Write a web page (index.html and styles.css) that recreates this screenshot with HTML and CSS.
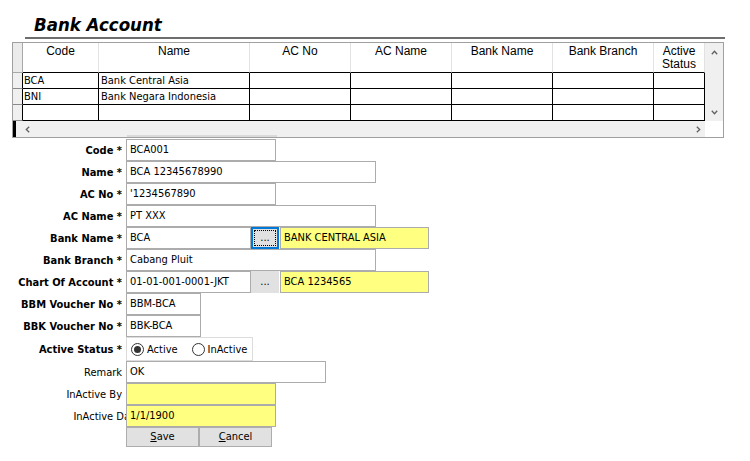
FILE: index.html
```html
<!DOCTYPE html>
<html>
<head>
<meta charset="utf-8">
<link rel="stylesheet" href="styles.css">
</head>
<body>
<div class="page">
  <div class="title">Bank Account</div>
  <div class="rule"></div>

  <div class="grid">
    <div class="tbl">
      <div class="hc rh"></div>
      <div class="hc">Code</div>
      <div class="hc">Name</div>
      <div class="hc">AC No</div>
      <div class="hc">AC Name</div>
      <div class="hc">Bank Name</div>
      <div class="hc">Bank Branch</div>
      <div class="hc">Active<br>Status</div>

      <div class="dc rh"></div>
      <div class="dc">BCA</div>
      <div class="dc pad2">Bank Central Asia</div>
      <div class="dc"></div><div class="dc"></div><div class="dc"></div><div class="dc"></div><div class="dc"></div>

      <div class="dc rh"></div>
      <div class="dc">BNI</div>
      <div class="dc pad2">Bank Negara Indonesia</div>
      <div class="dc"></div><div class="dc"></div><div class="dc"></div><div class="dc"></div><div class="dc"></div>

      <div class="dc rh"></div>
      <div class="dc"></div><div class="dc"></div><div class="dc"></div><div class="dc"></div><div class="dc"></div><div class="dc"></div><div class="dc"></div>
    </div>
    <div class="vscroll">
      <svg class="arrow" width="7" height="5" viewBox="0 0 7 5"><path d="M0.8 4.2 L3.5 1.3 L6.2 4.2" fill="none" stroke="#606060" stroke-width="1.3"/></svg>
      <svg class="arrow" width="7" height="5" viewBox="0 0 7 5"><path d="M0.8 0.8 L3.5 3.7 L6.2 0.8" fill="none" stroke="#606060" stroke-width="1.3"/></svg>
    </div>
    <div class="hscroll">
      <span class="mark"></span>
      <svg class="arrow larr" width="5" height="7" viewBox="0 0 5 7"><path d="M4.2 0.8 L1.3 3.5 L4.2 6.2" fill="none" stroke="#606060" stroke-width="1.3"/></svg>
      <span class="thumb"></span>
      <svg class="arrow rarr" width="5" height="7" viewBox="0 0 5 7"><path d="M0.8 0.8 L3.7 3.5 L0.8 6.2" fill="none" stroke="#606060" stroke-width="1.3"/></svg>
    </div>
    <div class="corner"></div>
  </div>

  <div class="form">
    <div class="row"><div class="lbl">Code *</div><div class="field w150">BCA001</div></div>
    <div class="row"><div class="lbl">Name *</div><div class="field w250">BCA 12345678990</div></div>
    <div class="row"><div class="lbl">AC No *</div><div class="field w150">'1234567890</div></div>
    <div class="row"><div class="lbl">AC Name *</div><div class="field w250">PT XXX</div></div>
    <div class="row">
      <div class="lbl">Bank Name *</div>
      <div class="field w125">BCA</div>
      <div class="dots focus"><span class="focusrect">...</span></div>
      <div class="field yellow w149">BANK CENTRAL ASIA</div>
    </div>
    <div class="row"><div class="lbl">Bank Branch *</div><div class="field w250">Cabang Pluit</div></div>
    <div class="row">
      <div class="lbl">Chart Of Account *</div>
      <div class="field w125">01-01-001-0001-JKT</div>
      <div class="dots"><span class="focusrect plain">...</span></div>
      <div class="field yellow w149">BCA 1234565</div>
    </div>
    <div class="row"><div class="lbl">BBM Voucher No *</div><div class="field w75">BBM-BCA</div></div>
    <div class="row"><div class="lbl">BBK Voucher No *</div><div class="field w75">BBK-BCA</div></div>
    <div class="row tall">
      <div class="lbl">Active Status *</div>
      <div class="radios">
        <span class="opt"><span class="radio on"></span>Active</span>
        <span class="opt second"><span class="radio"></span>InActive</span>
      </div>
    </div>
    <div class="row"><div class="lbl normal">Remark</div><div class="field w200">OK</div></div>
    <div class="row"><div class="lbl normal">InActive By</div><div class="field yellow w150"></div></div>
    <div class="row"><div class="lbl normal clipbox"><span class="clip">InActive Date</span></div><div class="field yellow w150">1/1/1900</div></div>
    <div class="row btnrow">
      <div class="lbl"></div>
      <div class="btn"><u>S</u>ave</div>
      <div class="btn second"><u>C</u>ancel</div>
    </div>
  </div>
</div>
</body>
</html>
```

FILE: styles.css
```css
html, body {
  margin: 0;
  padding: 0;
  background: #ffffff;
}

body {
  font-family: "DejaVu Sans Condensed", "DejaVu Sans", sans-serif;
  font-stretch: condensed;
  font-size: 11px;
  color: #000;
}

.page {
  width: 750px;
}

.title {
  height: 37px;
  box-sizing: border-box;
  padding-top: 14px;
  padding-left: 34px;
  line-height: 21px;
  font-size: 18.5px;
  font-weight: bold;
  font-style: italic;
  color: #000;
}

.rule {
  margin-left: 25px;
  width: 700px;
  height: 2px;
  background: #6e6e6e;
  margin-bottom: 3px;
}

/* ---------- data grid ---------- */
.grid {
  margin-left: 12px;
  width: 710px;
  border: 1px solid #a0a0a0;
  display: grid;
  grid-template-columns: 692px 18px;
  grid-template-rows: 78px 16px;
}

.tbl {
  display: grid;
  grid-template-columns: 10px 76px 151px 101px 101px 101px 101px 51px;
  grid-template-rows: 30px 16px 16px 16px;
}

.hc {
  box-sizing: border-box;
  border-right: 1px solid #e2e2e2;
  border-bottom: 1px solid #000;
  background: #fff;
  font-family: "Liberation Sans", Arial, sans-serif;
  font-stretch: normal;
  font-size: 12px;
  line-height: 13px;
  padding-top: 2px;
  text-align: center;
  color: #000;
}

.hc.rh {
  background: #ebebeb;
  border-right: 1px solid #a8a8a8;
  border-bottom: 1px solid #a8a8a8;
}

.dc {
  box-sizing: border-box;
  border-right: 1px solid #000;
  border-bottom: 1px solid #000;
  line-height: 15px;
  padding-left: 1px;
  white-space: nowrap;
  overflow: hidden;
}

.dc.pad2 {
  padding-left: 2px;
}

.dc.rh {
  background: #f0f0f0;
  border-bottom: 1px solid #8a8a8a;
}

.vscroll {
  background: #f0f0f0;
  display: flex;
  flex-direction: column;
  justify-content: space-between;
  align-items: center;
  padding: 7px 0 6px 0;
}

.arrow {
  display: block;
}

.hscroll {
  background: #f0f0f0;
  display: flex;
  align-items: center;
}

.mark {
  width: 3px;
  height: 16px;
  background: #000;
}

.larr {
  margin-left: 9px;
}

.thumb {
  flex: 0 0 150px;
  height: 2px;
  margin-left: 97px;
  align-self: flex-end;
  background: #dadada;
}

.rarr {
  margin-left: auto;
  margin-right: 4px;
}

.corner {
  background: #fff;
}

/* ---------- form ---------- */
.form {
  margin-top: 1px;
}

.row {
  display: flex;
  height: 22px;
}

.row.tall {
  height: 24px;
}

.lbl {
  width: 122px;
  margin-right: 4px;
  flex: 0 0 122px;
  display: flex;
  align-items: center;
  justify-content: flex-end;
  font-weight: bold;
  white-space: nowrap;
  overflow: hidden;
}

.lbl.normal {
  font-weight: normal;
}

.lbl.clipbox {
  width: 126px;
  flex: 0 0 126px;
  margin-right: 0;
}

.clip {
  margin-right: -14px;
}

.field {
  box-sizing: border-box;
  height: 22px;
  border: 1px solid #acacac;
  background: #fff;
  padding-left: 3px;
  line-height: 20px;
  white-space: nowrap;
  overflow: hidden;
}

.yellow {
  background: #ffff80;
}

.w75 { width: 75px; }
.w125 { width: 125px; }
.w149 { width: 149px; }
.w150 { width: 150px; }
.w200 { width: 200px; }
.w250 { width: 250px; }

.dots {
  box-sizing: border-box;
  width: 28px;
  height: 22px;
  margin-right: 1px;
  background: #e1e1e1;
  border: 1px solid #e1e1e1;
  display: flex;
  padding: 2px;
}

.dots.focus {
  border: 2px solid #0078d7;
  padding: 1px;
}

.focusrect {
  flex: 1;
  display: flex;
  justify-content: center;
  align-items: flex-end;
  line-height: 14px;
  border: 1px dotted #000;
}

.focusrect.plain {
  border-color: transparent;
}

.radios {
  box-sizing: border-box;
  width: 127px;
  height: 24px;
  border: 1px solid #dcdcdc;
  display: flex;
  align-items: center;
  padding-left: 4px;
}

.opt {
  display: flex;
  align-items: center;
}

.opt.second {
  margin-left: 14px;
}

.radio {
  box-sizing: border-box;
  width: 13px;
  height: 13px;
  border: 1px solid #333;
  border-radius: 50%;
  background: #fff;
  margin-right: 3px;
  display: flex;
  align-items: center;
  justify-content: center;
}

.radio.on::after {
  content: "";
  width: 7px;
  height: 7px;
  border-radius: 50%;
  background: #333;
}

.btnrow {
  height: 20px;
}

.btn {
  box-sizing: border-box;
  width: 73px;
  height: 20px;
  background: #e1e1e1;
  border: 1px solid #adadad;
  text-align: center;
  line-height: 18px;
}
```
